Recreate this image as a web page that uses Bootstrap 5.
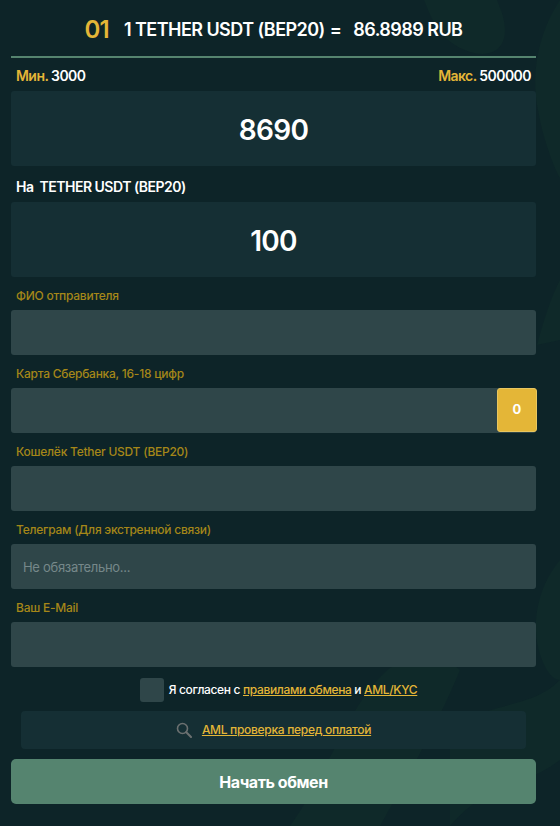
<!DOCTYPE html>
<html lang="ru">
<head>
<meta charset="utf-8">
<title>Обмен</title>
<link href="https://cdn.jsdelivr.net/npm/bootstrap@5.3.0/dist/css/bootstrap.min.css" rel="stylesheet">
<style>
html,body{height:100%}
body{background:#0d2428;color:#fff;font-family:Inter,"Noto Sans",sans-serif;overflow:hidden;position:relative}
.leaves{position:absolute;inset:0;width:560px;height:826px;z-index:0}
.exch{position:relative;z-index:1;width:525px;margin-left:11px}
.rate{height:58px;border-bottom:2px solid #55846f;font-size:18px;font-weight:600;letter-spacing:-.55px;padding-top:3px}
.rate-no{color:#e4b637;font-size:24px;font-weight:600;margin-right:15px;letter-spacing:-.8px}
.rate-eq{margin:0 8px 0 1px}
.limits{height:33px;font-size:14px;font-weight:600;letter-spacing:-.55px;padding:2px 5px 0}
.gold{color:#e4b637}
.amount{display:block;width:100%;height:75px;background:#152f34;border:0;border-radius:3px;color:#fff;text-align:center;font:600 28px Inter,sans-serif;letter-spacing:-.7px;outline:0;padding:2px 0 0}
.to-label{height:36px;font-size:14px;font-weight:600;letter-spacing:-.5px;padding:4px 5px 0}
.f-label{height:33px;font-size:12px;font-weight:500;letter-spacing:-.25px;color:#a58718;padding:4px 5px 0}
.f-input{display:block;width:100%;height:45px;background:#2f4649;border:0;border-radius:3px;color:#fff;font:400 13px Inter,sans-serif;letter-spacing:-.3px;padding:0 12px;outline:0}
.f-input::placeholder{color:#76888a;opacity:1}
.card-btn{position:absolute;right:-1px;top:0;width:40px;height:44px;background:#e4b637;border:1px solid #e8c660;border-radius:3px;color:#fff;font-size:13px;font-weight:700;padding:0}
.agree{height:44px;font-size:12px;font-weight:500;letter-spacing:-.35px;padding:2px 0 0 10px}
.box{width:24px;height:24px;background:#2f4649;border-radius:3px;margin-right:5px}
.agree a,.aml a{color:#e4b637}
.aml{height:38px;margin:0 10px;background:#152f34;border-radius:4px;font-size:12px;font-weight:500;letter-spacing:-.3px}
.aml svg{margin-right:10px}
.go{display:block;width:100%;height:45px;margin-top:10px;background:#55846f;border:0;border-radius:5px;color:#fff;font-size:16px;font-weight:700;letter-spacing:-.45px}
.go:hover{background:#55846f;color:#fff}
</style>
</head>
<body>
<svg class="leaves" viewBox="0 0 560 826" aria-hidden="true">
<g fill="#0f2929">
<path d="M424 0C432 20 440 42 470 52C490 58 505 50 505 30C505 18 500 8 497 0Z"/>
<path d="M560 0C540 30 530 70 538 110C543 140 555 170 560 178Z"/>
<path d="M537 345C545 315 552 295 560 280V340Z"/>
<path d="M290 826C330 770 350 700 390 668C420 650 450 660 460 670C440 720 400 790 380 826Z"/>
<path d="M450 730C490 700 530 710 560 680V760C520 790 490 780 450 826Z"/>
<path d="M560 560C535 590 530 630 542 660C548 675 555 680 560 680Z"/>
</g>
</svg>
<main class="exch">
<div class="rate d-flex align-items-center justify-content-center">
<span class="rate-no">01</span><span>1 TETHER USDT (BEP20)<span class="rate-eq"> = </span>86.8989 RUB</span>
</div>
<div class="limits d-flex justify-content-between align-items-center">
<span><span class="gold">Мин.</span> 3000</span>
<span><span class="gold">Макс.</span> 500000</span>
</div>
<input class="amount" type="text" value="8690" aria-label="Сумма отправки">
<div class="to-label d-flex align-items-center">На&nbsp; TETHER USDT (BEP20)</div>
<input class="amount" type="text" value="100" aria-label="Сумма получения">
<label class="f-label d-flex align-items-center w-100">ФИО отправителя</label>
<input class="f-input" type="text">
<label class="f-label d-flex align-items-center w-100">Карта Сбербанка, 16-18 цифр</label>
<div class="position-relative">
<input class="f-input" type="text">
<button class="card-btn" type="button">0</button>
</div>
<label class="f-label d-flex align-items-center w-100">Кошелёк Tether USDT (BEP20)</label>
<input class="f-input" type="text">
<label class="f-label d-flex align-items-center w-100">Телеграм (Для экстренной связи)</label>
<input class="f-input" type="text" placeholder="Не обязательно...">
<label class="f-label d-flex align-items-center w-100">Ваш E-Mail</label>
<input class="f-input" type="text">
<div class="agree d-flex align-items-center justify-content-center">
<span class="box"></span>
<span>Я согласен с <a href="#">правилами обмена</a> и <a href="#">AML/KYC</a></span>
</div>
<div class="aml d-flex align-items-center justify-content-center">
<svg width="16" height="16" viewBox="0 0 16 16" fill="none" stroke="#6b7070" stroke-width="1.6" stroke-linecap="round"><circle cx="6.5" cy="6.5" r="5"/><path d="M10.3 10.3 15 15" stroke-width="2"/></svg>
<a href="#">AML проверка перед оплатой</a>
</div>
<button class="btn go" type="button">Начать обмен</button>
</main>
</body>
</html>
